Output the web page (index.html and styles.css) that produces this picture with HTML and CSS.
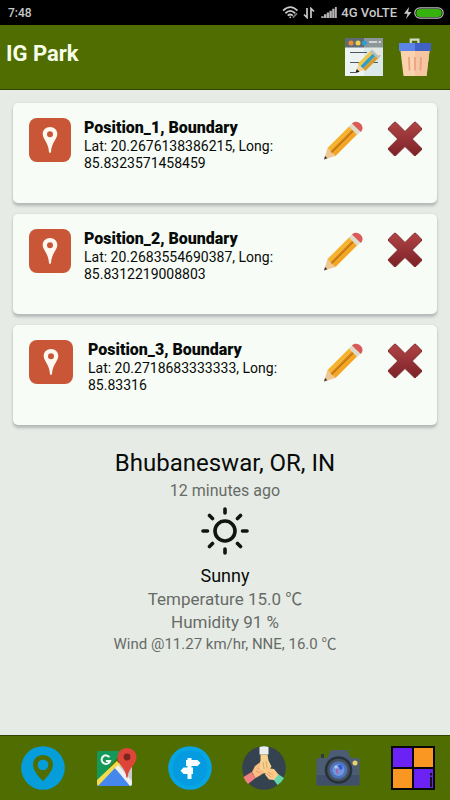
FILE: index.html
```html
<!DOCTYPE html>
<html lang="en">
<head>
<meta charset="utf-8">
<meta name="viewport" content="width=device-width, initial-scale=1">
<title>IG Park</title>
<link rel="stylesheet" href="styles.css">
</head>
<body>
<svg class="defs" aria-hidden="true">
  <defs>
    <linearGradient id="red" x1="0" y1="0" x2="0" y2="1"><stop offset="0" stop-color="#b04446"/><stop offset="1" stop-color="#7b2227"/></linearGradient>
    <symbol id="pin" viewBox="0 0 16 28">
      <path fill-rule="evenodd" fill="#fff8f0" d="M8 1C3.800 1 .7 4 .7 8c0 5 5.600 8 6.300 18q1 2 2 0C9.700 16 15.300 13 15.300 8c0-4-3.100-7-7.300-7zm0 4.300a3 3 0 1 1 0 6 3 3 0 0 1 0-6z"/>
    </symbol>
    <symbol id="pencil" viewBox="0 0 40 40">
      <path fill="#efc795" d="M1 38.500 4.500 27l8 8z"/>
      <path fill="#3f3a3a" d="M1 38.500 2.100 35l2.300 2.300z"/>
      <path fill="#f6b32d" d="M4.500 27 27 4.500l2.800 2.800L7.200 30z"/>
      <path fill="#e28d12" d="M7.200 30 29.800 7.300l2.600 2.600L9.800 32.500z"/>
      <path fill="#f4a51f" d="M9.800 32.500 32.400 9.900l2.600 2.600L12.500 35z"/>
      <path fill="#b96d0d" d="M8.300 31.100 30.900 8.400l.6.600L8.900 31.700z"/>
      <path fill="#dddcca" d="M26 5.500 29.500 2l8.300 8.300-3.600 3.600z"/>
      <path fill="#d95a57" d="M29 2.500c2-2.500 6-2.500 8.600.2 2.500 2.500 2.600 5.900.2 8.300z"/>
    </symbol>
    <symbol id="cross" viewBox="0 0 36 36">
      <path fill="url(#red)" stroke="#842c30" stroke-width="1" d="M7 1.500q1-.8 2 0l9 9 9-9q1-.8 2 0L34.300 7q.9 1 0 2l-9 9 9 9q.9 1 0 2L29 34.300q-1 .9-2 0l-9-8.800-9 8.800q-1 .9-2 0L1.700 29q-.9-1 0-2l9-9-9-9q-.9-1 0-2z"/>
    </symbol>
  </defs>
</svg>

<div class="app">
  <div class="status">
    <span>7:48</span>
    <div class="status-right">
      <svg width="17" height="13" viewBox="0 0 18 14" fill="none" stroke="#c9c9c9" stroke-width="1.900"><path d="M1 5q8-7.500 15.500 0M3.500 7.800q5.200-5 10.500 0M6 10.400q2.800-2.600 5.500 0"/><circle cx="8.700" cy="12.200" r="1" fill="#c9c9c9" stroke="none"/><path d="m11.500 12.500 4.500-4.500" stroke="#777"/></svg>
      <svg class="updown" width="12" height="12" viewBox="0 0 12 12" fill="none" stroke="#c9c9c9" stroke-width="1.700"><path d="M4 1v9.500L1 7.500M8 11V1.500l3 3"/></svg>
      <svg class="signal" width="16" height="11" viewBox="0 0 17 12" fill="#b4b4b4"><path d="M0 10h2.600v2H0zM3 8h2.600v4H3zM6 6h2.600v6H6zM9 4h2.600v8H9zM12 2h2.600v10H12zM15 0h2v12h-2z"/></svg>
      <span>4G VoLTE</span>
      <svg class="bolt" width="8" height="12" viewBox="0 0 8 12"><path fill="#c9c9c9" d="M5 0 0 6.800h3.500L2 12l5.500-7H4.200z"/></svg>
      <svg width="30" height="12" viewBox="0 0 30 12"><rect x=".8" y=".8" width="28.400" height="10.400" rx="5.200" fill="#000" stroke="#bdbdbd" stroke-width="1.200"/><rect x="2.200" y="2" width="25.600" height="8" rx="4" fill="#35b20b"/></svg>
    </div>
  </div>

  <header class="header">
    <h1>IG Park</h1>
    <button class="icon-btn" aria-label="Edit page">
      <svg width="38" height="38" viewBox="0 0 38 38">
        <path fill="#dce9e9" d="M0 8h38v30H0z"/><path fill="#edf3f2" d="M0 8h19v30H0z"/>
        <path fill="#5d6b74" d="M0 0h19v9.500H0z"/><path fill="#8c9698" d="M19 0h19v9.500H19z"/>
        <circle cx="6" cy="5" r="2.500" fill="#ed8e3b"/><circle cx="13" cy="5" r="2.500" fill="#f4d04a"/><circle cx="19.500" cy="5" r="2.500" fill="#2e9fd4"/>
        <path stroke="#e5eaea" stroke-width="1.300" d="M24 4h8M33.500 4H36"/>
        <path stroke="#4c5965" stroke-width="1.200" d="M5 14.500h17M5 24.500h11M5 34.500h6M27 24.500h6"/>
        <path fill="#f5d49a" d="m10.500 35 3-9 6 6z"/><path fill="#191919" d="m10.500 35 1.300-4 2.700 2.700z"/>
        <path fill="#f1c646" d="M12.500 26 25 13.500l3 2L15.500 28z"/><path fill="#2f9ec5" d="M15.500 28 28 15.500l2.500 2.500L18 30.500z"/><path fill="#d99b28" d="M18 30.500 30.500 18l2.700 2.200L20.200 33z"/>
        <path fill="#b9bdbb" d="m25 13.500 3-2.800 8 7-3 3z"/><path fill="#e6e6e0" d="m27 11.500 1.500-1.200q2-.8 4.500 1.200 3 2.500 2 4.500L33.600 18z"/>
      </svg>
    </button>
    <button class="icon-btn" aria-label="Delete all">
      <svg width="34" height="38" viewBox="0 0 34 38">
        <path fill="none" stroke="#d6d9ce" stroke-width="2.200" d="M12.800 5V1.600h7.600V5"/>
        <path fill="#f9d3ad" d="M2.500 13h29L28.500 38h-23z"/><path fill="#f6c6a2" d="M17 13h14.500L28.500 38H17z"/>
        <path fill="#5c83e8" d="M1 5h32v8H1z"/><path fill="#3f62c4" d="M17 5h16v8H17z"/>
        <path fill="none" stroke="#eda185" stroke-width="1.800" d="m11 19 .5 13.500M17 19v13.500M23 19l-.5 13.500"/>
      </svg>
    </button>
  </header>

  <main class="content">
    <ul class="cards">
      <li class="card">
        <span class="tile narrow"><svg width="16" height="28"><use href="#pin"/></svg></span>
        <div class="info"><h2>Position_1, Boundary</h2><p>Lat: 20.2676138386215, Long: 85.8323571458459</p></div>
        <button class="icon-btn" aria-label="Edit Position_1"><svg width="40" height="40"><use href="#pencil"/></svg></button>
        <button class="icon-btn" aria-label="Delete Position_1"><svg width="36" height="36"><use href="#cross"/></svg></button>
      </li>
      <li class="card">
        <span class="tile narrow"><svg width="16" height="28"><use href="#pin"/></svg></span>
        <div class="info"><h2>Position_2, Boundary</h2><p>Lat: 20.2683554690387, Long: 85.8312219008803</p></div>
        <button class="icon-btn" aria-label="Edit Position_2"><svg width="40" height="40"><use href="#pencil"/></svg></button>
        <button class="icon-btn" aria-label="Delete Position_2"><svg width="36" height="36"><use href="#cross"/></svg></button>
      </li>
      <li class="card wide">
        <span class="tile"><svg width="16" height="28"><use href="#pin"/></svg></span>
        <div class="info"><h2>Position_3, Boundary</h2><p>Lat: 20.2718683333333, Long: 85.83316</p></div>
        <button class="icon-btn" aria-label="Edit Position_3"><svg width="40" height="40"><use href="#pencil"/></svg></button>
        <button class="icon-btn" aria-label="Delete Position_3"><svg width="36" height="36"><use href="#cross"/></svg></button>
      </li>
    </ul>

    <section class="weather">
      <h2>Bhubaneswar, OR, IN</h2>
      <p class="muted updated">12 minutes ago</p>
      <svg class="sun" width="48" height="48" viewBox="0 0 48 48" fill="none" stroke="#101510" stroke-width="3.600"><circle cx="24" cy="24" r="10"/><path stroke-linecap="round" d="M24 2v4M24 42v4M2 24h4.500M41.500 24H46M8.500 8.500l3 3M36.500 36.500l3 3M39.500 8.500l-3 3M11.500 36.500l-3 3"/></svg>
      <p class="condition">Sunny</p>
      <p class="muted">Temperature 15.0 ℃</p>
      <p class="muted">Humidity 91 %</p>
      <p class="muted wind">Wind @11.27 km/hr, NNE, 16.0 ℃</p>
    </section>
  </main>

  <nav class="nav">
    <button class="icon-btn" aria-label="Location">
      <svg width="44" height="44" viewBox="0 0 44 44"><circle cx="22" cy="22" r="21.800" fill="#059edb"/><path fill="#4f6d00" fill-rule="evenodd" d="M22 9c-5.700 0-10 4.200-10 9.700C12 26 22 35 22 35s10-9 10-16.300C32 13.200 27.700 9 22 9zm0 4.700a5.200 5.200 0 1 0 0 10.400 5.200 5.200 0 0 0 0-10.400z"/><circle cx="22" cy="18.900" r="5.200" fill="#059edb"/></svg>
    </button>
    <button class="icon-btn" aria-label="Maps">
      <svg width="42" height="42" viewBox="0 0 42 42">
        <path fill="#15995a" d="M4 4h24L2 35V6q0-2 2-2z"/><path fill="#c9cccb" d="M24 16 37 5v33L20 21z"/>
        <path fill="#f2dc4e" d="m2 33 20-19 4 5L4 39q-2 0-2-2z"/><path fill="#4587ed" d="m3 39 17-18 16 18z"/>
        <path fill="#eef1ef" d="m20 21 3-3 14 16v3q0 2-2 2z"/>
        <path fill="none" stroke="#f4f7f2" stroke-width="2" d="M14.500 10.200a4.300 4.300 0 1 0 .6 3.700h-4.200"/>
        <path fill="#dc4537" d="M32 1c-5.500 0-9.500 4-9.500 9C22.500 18 31 21 31.300 30q.7 2 1.400 0C33 21 41.500 18 41.500 10c0-5-4-9-9.500-9z"/><circle cx="32" cy="10" r="3.400" fill="#7c2421"/>
      </svg>
    </button>
    <button class="icon-btn" aria-label="Directions">
      <svg width="44" height="44" viewBox="0 0 44 44"><circle cx="22" cy="22" r="21.800" fill="#07a5e2"/><circle cx="22" cy="22" r="17.500" fill="#049be0"/><path fill="#f9ffff" d="M19.500 12h4v2h6l3 3-3 3h-6v1.500H25v6.500h-1.500v5h-4v-5h-4l-3-3.200 3-3.300h4V20H18v-6h1.500z"/></svg>
    </button>
    <button class="icon-btn" aria-label="Community">
      <svg width="44" height="44" viewBox="0 0 44 44">
        <circle cx="22" cy="22" r="21.800" fill="#34434f"/>
        <path fill="#eceff0" d="M17.500 1q4.500-1.500 9 0v7.500h-9z"/><path fill="#f7d28d" d="M18.500 8.500h7l1 6 3 6-2 3-1.500 3-4.500 1-4-3-1-5 2-5z"/>
        <path fill="#ef8280" d="m1.500 31 8-5 4 6-7.500 6Q3 35 1.500 31z"/><path fill="#fbbd82" d="m10 26 3-6 4-3 1.500 1.500-2 4 5 2 .8 2-4.300 3-4.500 2.500z"/>
        <path fill="#62d6ac" d="m36 28 6 4q-2 4-6.500 7L31 33z"/><path fill="#fdc989" d="m23 21 5 1.500 4 .5 4.500 5.500-4.500 5.500-5-.5-4-5 1-2z"/>
        <path fill="none" stroke="#d89a68" stroke-width=".8" d="m21 16 1 7M24 15l1 7M14 25l4 2M26 26l5 3M25 28l4 3"/>
      </svg>
    </button>
    <button class="icon-btn" aria-label="Camera">
      <svg width="44" height="44" viewBox="0 0 44 44">
        <path fill="#303b41" d="M5 8h3v4H5z"/><path fill="#4b5c74" d="M1 12h10l4-8h16l4 8h7q1.500 0 1.500 1.500V38q0 1.500-1.500 1.500H2Q.5 39.500.5 38V13z"/>
        <path fill="#40506a" d="M.5 29h43v9q0 1.500-1.500 1.500H2Q.5 39.500.5 38z"/>
        <circle cx="22.500" cy="24" r="13.800" fill="#263139"/><circle cx="22.500" cy="24" r="11.200" fill="#46515d"/><circle cx="22.500" cy="24" r="8.800" fill="#4b72bb"/><circle cx="22.500" cy="24" r="6" fill="#7295dc"/><path fill="#3159d5" d="M22 19q5-1 4.500 4L24 24z"/><path fill="#b65a9d" d="m20 22 2 2-.5 4q-2-1-1.500-6z"/><circle cx="20" cy="21" r="1.500" fill="#bac7ee"/>
        <circle cx="39" cy="17" r="2.500" fill="#ead16a"/>
      </svg>
    </button>
    <button class="icon-btn" aria-label="More information">
      <svg width="44" height="44" viewBox="0 0 44 44"><path fill="#080808" d="M0 0h44v44H0z"/><path fill="#6b22f4" d="M2 2h19v19H2zM23 23h19v19H23z"/><path fill="#f99722" d="M23 2h19v19H23zM2 23h19v19H2z"/><path fill="#17101e" d="M39 27h2v2.500h-2zM39 31h2v10h-2z"/></svg>
    </button>
  </nav>
</div>
</body>
</html>
```
FILE: styles.css
```css
* { box-sizing: border-box; }

body {
  margin: 0;
  background: #e7ebe6;
  color: #080b08;
  font-family: Roboto, "Noto Sans CJK JP", sans-serif;
}

h1, h2, p, ul { margin: 0; padding: 0; }
svg { display: block; }
.defs { position: absolute; width: 0; height: 0; }

.icon-btn {
  display: block;
  flex: none;
  padding: 0;
  border: 0;
  background: none;
  cursor: pointer;
}

.app {
  display: flex;
  flex-direction: column;
  min-height: 100vh;
}

.status {
  display: flex;
  align-items: center;
  justify-content: space-between;
  height: 25px;
  padding: 0 6px 0 8px;
  background: #000;
  color: #c9c9c9;
  font-size: 12px;
  font-weight: 500;
}

.status-right {
  display: flex;
  align-items: center;
  font-size: 13px;
}

.updown { margin-left: 4px; }
.signal { margin: 0 4px 0 6px; }
.bolt { margin: 0 2px 0 7px; }

.header {
  display: flex;
  align-items: flex-start;
  gap: 15px;
  height: 65px;
  padding: 13px 18px 0 6px;
  background: #4f6d00;
  border-bottom: 1px solid #304400;
}

.header h1 {
  flex: 1;
  color: #f7ffea;
  font-size: 22px;
  font-weight: 700;
  line-height: 32px;
}

.content { flex: 1; padding: 13px; }

.cards {
  display: flex;
  flex-direction: column;
  gap: 11px;
  list-style: none;
}

.card {
  display: flex;
  align-items: flex-start;
  min-height: 100px;
  padding: 15px 14px 14px 16px;
  border-radius: 5px;
  background: #f7fcf7;
  box-shadow: 0 3px 3px #b5bab8, 0 0 2px #cdd1d6;
}

.tile {
  display: grid;
  place-items: center;
  flex: none;
  width: 44px;
  height: 44px;
  border-radius: 8px;
  background: #c95737;
}

.tile.narrow { width: 42px; }

.info { flex: 1; padding: 0 40px 0 13px; }
.wide .info { padding: 0 36px 0 15px; }
.info h2 { font-size: 16px; font-weight: 900; line-height: 20px; }
.info p { font-size: 14px; line-height: 17px; }
.card .icon-btn { margin-top: 3px; }
.card .icon-btn + .icon-btn { margin-left: 24px; }

.weather {
  display: flex;
  flex-direction: column;
  align-items: center;
  padding-top: 22px;
  text-align: center;
}

.weather h2 { font-size: 24px; font-weight: 400; line-height: 32px; }
.weather p { font-size: 17px; line-height: 23px; }
.weather .muted { color: #666b66; }
.weather .updated { font-size: 16px; }
.weather .condition { font-size: 18px; line-height: 24px; }
.weather .wind { font-size: 15px; line-height: 21px; }
.sun { margin: 5px 0 9px; }

.nav {
  display: flex;
  align-items: center;
  justify-content: space-around;
  height: 65px;
  padding-left: 6px;
  border-top: 1px solid #304400;
  background: #4f6d00;
}
```
